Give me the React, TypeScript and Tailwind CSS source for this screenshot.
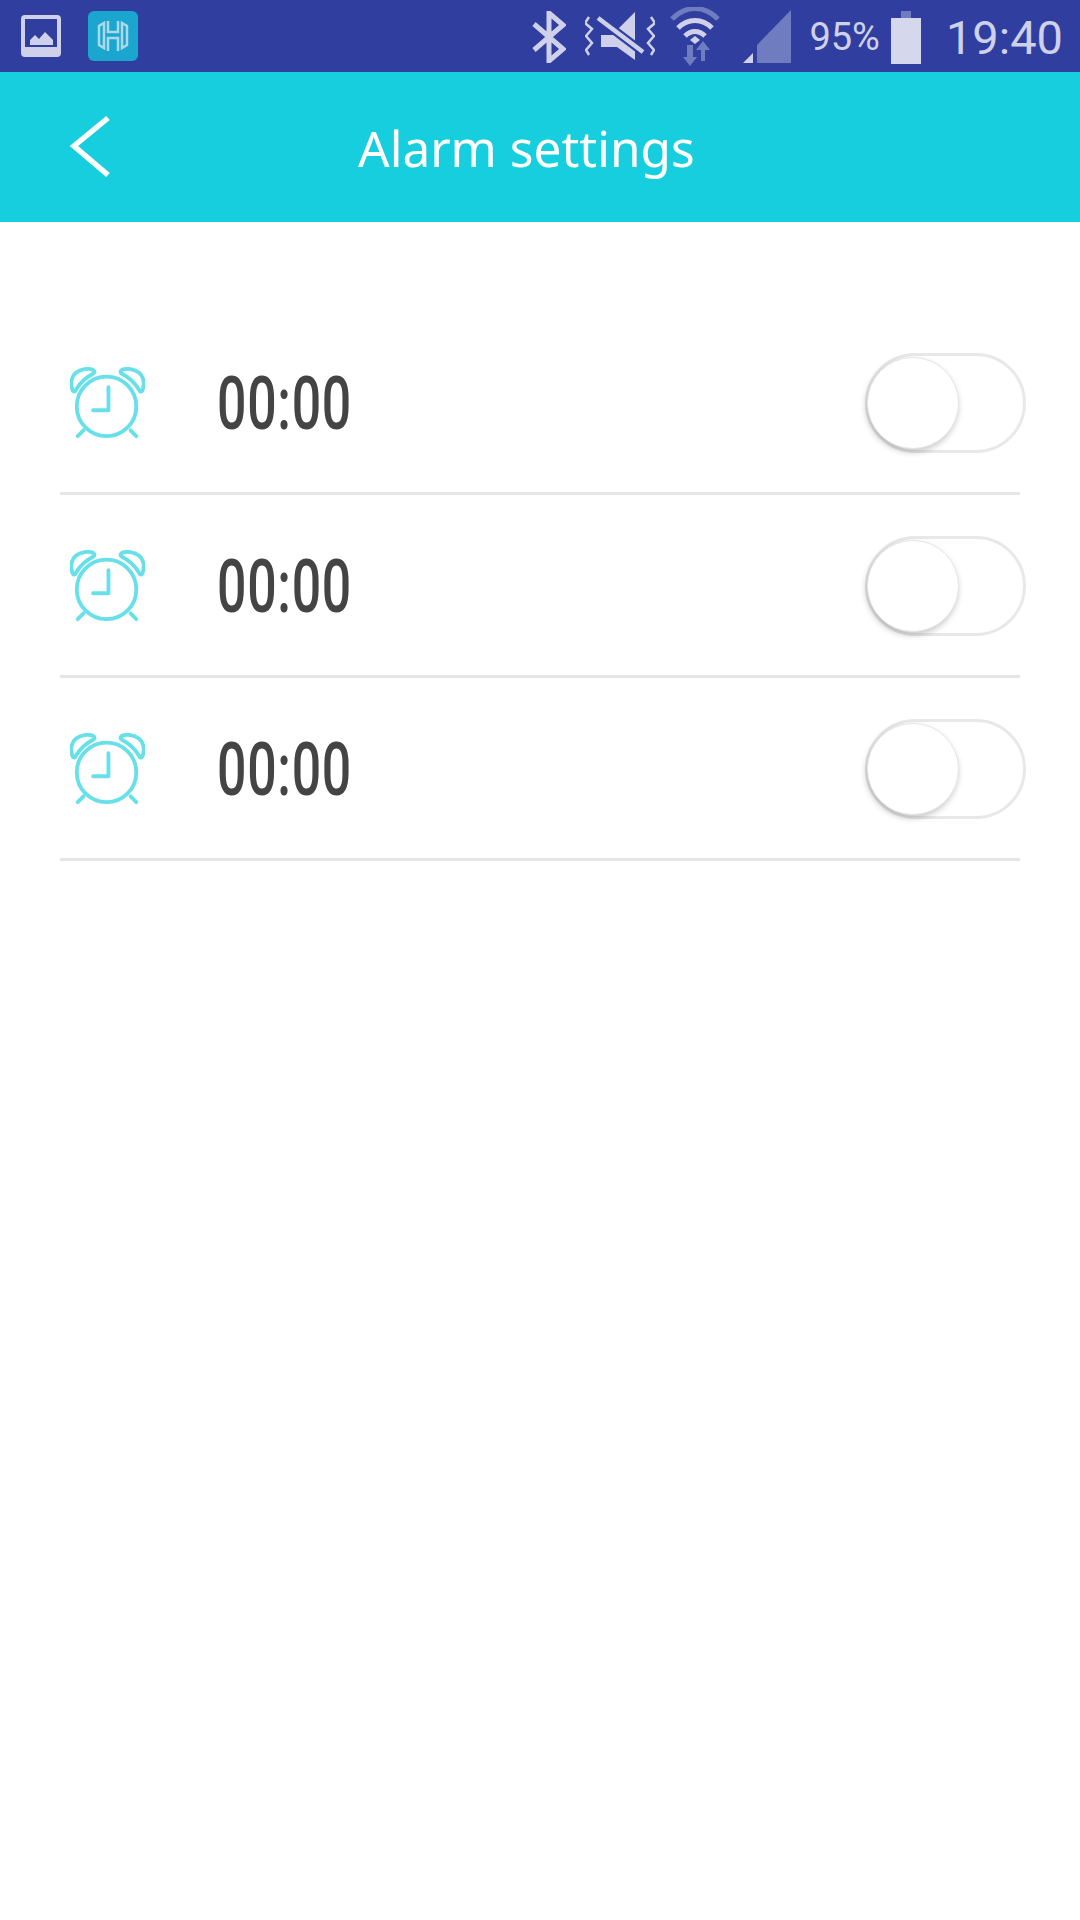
const rows = [0, 1, 2];

function GalleryIcon() {
  return (
    <svg width="40" height="42" viewBox="0 0 40 42" className="ml-[21px]">
      <rect x="2" y="2" width="36" height="38" rx="2" fill="none" stroke="#cfd1ea" strokeWidth="4" />
      <rect x="2" y="32" width="36" height="8" fill="#cfd1ea" />
      <path d="M9 30v-5l5-5 4 4 6-7 8 8v5z" fill="#cfd1ea" />
    </svg>
  );
}

function AppIcon() {
  return (
    <div className="ml-[27px] flex h-[50px] w-[50px] items-center justify-center rounded-md bg-[#1ba6cf]">
      <svg width="32" height="36" viewBox="0 0 32 36" fill="none" stroke="#a9d9ea" strokeWidth="2.5">
        <path d="M2 8v19l5 3V5zM11 3v11h10V3M11 33V20h10v13M25 5v25l5-3V8z" />
      </svg>
    </div>
  );
}

function StatusIcons() {
  return (
    <div className="ml-auto flex items-center pt-[2px]">
      <svg width="34" height="52" viewBox="0 0 34 52" fill="none" stroke="#cfd1ea" strokeWidth="5">
        <path d="M2 13l29 25-14 12V2l14 12L2 39" />
      </svg>
      <svg width="70" height="50" viewBox="0 0 70 50" className="ml-[19px]" fill="none">
        <path d="M4 5L0 11l7 6-6 7 6 7-6 7 3 5M66 5l4 6-7 6 6 7-6 7 6 7-3 5" stroke="#cfd1ea" strokeWidth="2.5" />
        <path d="M50 0v30L33 17zM16 23h17l17 15v10L32 35H16z" fill="#cfd1ea" />
        <path d="M13 6l45 34" stroke="#303f9f" strokeWidth="9" />
        <path d="M13 6l45 34" stroke="#cfd1ea" strokeWidth="4.5" />
      </svg>
      <svg width="50" height="60" viewBox="0 0 50 60" className="ml-[15px]" fill="none">
        <path d="M2 12c14-14 32-14 46 0" stroke="#6f7cbf" strokeWidth="5" />
        <path d="M8 21c10-10 24-10 34 0M15 29c6-6 14-6 20 0" stroke="#cfd1ea" strokeWidth="5" />
        <path d="M25 29l5 4-5 4-5-4z" fill="#cfd1ea" />
        <path d="M17 38h6v12h4l-7 9-7-9h4zM31 54V43h-5l7-9 7 9h-5v11z" fill="#6f7cbf" />
      </svg>
      <svg width="48" height="54" viewBox="0 0 48 54" className="ml-[23px]">
        <path d="M14 53V35L48 0v53z" fill="#6f7cbf" />
        <path d="M0 53l10-10v10z" fill="#cfd1ea" />
      </svg>
      <span className="ml-[18px] font-['Roboto',sans-serif] text-[38px] leading-none text-[#cfd1ea]">95%</span>
      <div className="ml-[11px] flex flex-col items-center">
        <div className="h-[7px] w-[10px] bg-[#6f7cbf]" />
        <div className="h-[46px] w-[30px] bg-[#d5d8ec]" />
      </div>
      <span className="ml-[25px] mr-[17px] font-['Roboto',sans-serif] text-[47px] leading-none text-[#cfd1ea]">19:40</span>
    </div>
  );
}

function AlarmIcon() {
  return (
    <svg width="75" height="73" viewBox="0 0 78 76" className="blur-[0.6px]" fill="none" stroke="#68e0ea" strokeWidth="4" strokeLinecap="round" strokeLinejoin="round">
      <circle cx="38" cy="41" r="31" />
      <path d="M40 21v24H24" />
      <path d="M3 25C0 18 1 10 6 6c5-4 13-5 18-3 2 1 2 3 0 4C16 11 10 17 6 24c-1 2-2 2-3 1z" />
      <path d="M75 25c3-7 2-15-3-19-5-4-13-5-18-3-2 1-2 3 0 4 8 4 14 10 18 17 1 2 2 2 3 1z" />
      <path d="M14 66l-6 6M63 66l6 6" />
    </svg>
  );
}

function Toggle() {
  return (
    <div className="relative -mr-[6px] h-[100px] w-[161px] rounded-full border-[3px] border-[#e8e8e8] bg-white">
      <div className="absolute -left-[1px] top-[1px] h-[92px] w-[92px] rounded-full border border-[#e6e6e6] bg-white shadow-[-1px_3px_6px_rgba(0,0,0,0.22)]" />
    </div>
  );
}

function AlarmRow() {
  return (
    <div className="flex h-[183px] items-center border-b-[3px] border-[#e6e6e6] pt-[2px]">
      <div className="ml-[10px] flex w-[147px]">
        <AlarmIcon />
      </div>
      <span className="origin-left translate-y-[1px] scale-x-[0.7] font-['Roboto',sans-serif] text-[74px] font-medium leading-none tracking-[1px] text-[#444444]">00:00</span>
      <div className="ml-auto">
        <Toggle />
      </div>
    </div>
  );
}

export default function App() {
  return (
    <div className="min-h-[1920px] w-[1080px] bg-white">
      <div className="flex h-[72px] items-center bg-[#303f9f]">
        <GalleryIcon />
        <AppIcon />
        <StatusIcons />
      </div>
      <div className="flex h-[150px] items-center bg-[#16cede]">
        <svg width="44" height="64" viewBox="0 0 44 64" className="ml-[69px]" fill="none" stroke="#ffffff" strokeWidth="5.5">
          <path d="M39 3L5 31l34 29" />
        </svg>
        <span className="ml-[245px] pt-[3px] font-['Noto_Sans',sans-serif] text-[49.5px] leading-none text-white">Alarm settings</span>
      </div>
      <div className="mx-[60px] mt-[90px]">
        {rows.map((r) => (
          <AlarmRow key={r} />
        ))}
      </div>
    </div>
  );
}
